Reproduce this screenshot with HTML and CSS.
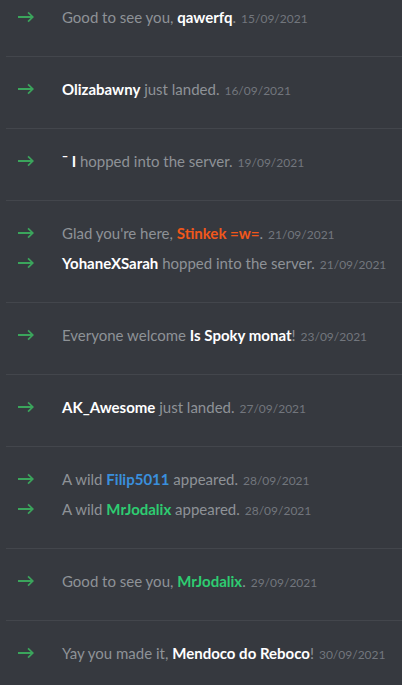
FILE: index.html
```html
<!DOCTYPE html>
<html lang="en">
<head>
    <meta charset="UTF-8">
    <meta name="viewport" content="width=device-width, initial-scale=1.0">
    <title>Welcome messages</title>
    <link rel="stylesheet" href="styles.css">
</head>
<body>
    <main class="chat">
        <div class="group">
            <div class="msg">
                <svg class="arrow" viewBox="0 0 18 18"><path d="M0 8h14.2l-3.6-3.6 1.4-1.4 6 6-6 6-1.4-1.4 3.6-3.6H0z"/></svg>
                <span class="text">Good to see you, <strong class="name">qawerfq</strong>.</span><time class="stamp">15/09/2021</time>
            </div>
        </div>
        <div class="group">
            <div class="msg">
                <svg class="arrow" viewBox="0 0 18 18"><path d="M0 8h14.2l-3.6-3.6 1.4-1.4 6 6-6 6-1.4-1.4 3.6-3.6H0z"/></svg>
                <span class="text"><strong class="name">Olizabawny</strong> just landed.</span><time class="stamp">16/09/2021</time>
            </div>
        </div>
        <div class="group">
            <div class="msg">
                <svg class="arrow" viewBox="0 0 18 18"><path d="M0 8h14.2l-3.6-3.6 1.4-1.4 6 6-6 6-1.4-1.4 3.6-3.6H0z"/></svg>
                <span class="text"><strong class="name">¯ I</strong> hopped into the server.</span><time class="stamp">19/09/2021</time>
            </div>
        </div>
        <div class="group">
            <div class="msg">
                <svg class="arrow" viewBox="0 0 18 18"><path d="M0 8h14.2l-3.6-3.6 1.4-1.4 6 6-6 6-1.4-1.4 3.6-3.6H0z"/></svg>
                <span class="text">Glad you're here, <strong class="name orange">Stinkek =w=</strong>.</span><time class="stamp">21/09/2021</time>
            </div>
            <div class="msg">
                <svg class="arrow" viewBox="0 0 18 18"><path d="M0 8h14.2l-3.6-3.6 1.4-1.4 6 6-6 6-1.4-1.4 3.6-3.6H0z"/></svg>
                <span class="text"><strong class="name">YohaneXSarah</strong> hopped into the server.</span><time class="stamp">21/09/2021</time>
            </div>
        </div>
        <div class="group">
            <div class="msg">
                <svg class="arrow" viewBox="0 0 18 18"><path d="M0 8h14.2l-3.6-3.6 1.4-1.4 6 6-6 6-1.4-1.4 3.6-3.6H0z"/></svg>
                <span class="text">Everyone welcome <strong class="name">Is Spoky monat</strong>!</span><time class="stamp">23/09/2021</time>
            </div>
        </div>
        <div class="group">
            <div class="msg">
                <svg class="arrow" viewBox="0 0 18 18"><path d="M0 8h14.2l-3.6-3.6 1.4-1.4 6 6-6 6-1.4-1.4 3.6-3.6H0z"/></svg>
                <span class="text"><strong class="name">AK_Awesome</strong> just landed.</span><time class="stamp">27/09/2021</time>
            </div>
        </div>
        <div class="group">
            <div class="msg">
                <svg class="arrow" viewBox="0 0 18 18"><path d="M0 8h14.2l-3.6-3.6 1.4-1.4 6 6-6 6-1.4-1.4 3.6-3.6H0z"/></svg>
                <span class="text">A wild <strong class="name blue">Filip5011</strong> appeared.</span><time class="stamp">28/09/2021</time>
            </div>
            <div class="msg">
                <svg class="arrow" viewBox="0 0 18 18"><path d="M0 8h14.2l-3.6-3.6 1.4-1.4 6 6-6 6-1.4-1.4 3.6-3.6H0z"/></svg>
                <span class="text">A wild <strong class="name green">MrJodalix</strong> appeared.</span><time class="stamp">28/09/2021</time>
            </div>
        </div>
        <div class="group">
            <div class="msg">
                <svg class="arrow" viewBox="0 0 18 18"><path d="M0 8h14.2l-3.6-3.6 1.4-1.4 6 6-6 6-1.4-1.4 3.6-3.6H0z"/></svg>
                <span class="text">Good to see you, <strong class="name green">MrJodalix</strong>.</span><time class="stamp">29/09/2021</time>
            </div>
        </div>
        <div class="group">
            <div class="msg">
                <svg class="arrow" viewBox="0 0 18 18"><path d="M0 8h14.2l-3.6-3.6 1.4-1.4 6 6-6 6-1.4-1.4 3.6-3.6H0z"/></svg>
                <span class="text">Yay you made it, <strong class="name">Mendoco do Reboco</strong>!</span><time class="stamp">30/09/2021</time>
            </div>
        </div>
    </main>
</body>
</html>
```

FILE: styles.css
```css
body {
    margin: 0;
    background-color: #36393f;
    font-family: 'Lato', 'Noto Sans', sans-serif;
    overflow: hidden;
}
.chat {
    margin-top: -15px; /* list is scrolled a little */
}
.group {
    margin-left: 6px;
    padding: 17px 0 24px;
    border-bottom: 1px solid #43464c;
}
.msg {
    display: flex;
    align-items: center;
    height: 30px;
    padding-left: 12px;
    white-space: nowrap;
}
.arrow {
    width: 16px;
    height: 16px;
    fill: #3ba55c;
    margin-right: 28px;
    flex-shrink: 0;
}
.text {
    font-size: 15px;
    color: #8e9297;
}
.name {
    font-weight: 700;
    color: #ffffff;
}
.orange {
    color: #f0571b;
}
.blue {
    color: #3a8fdc;
}
.green {
    color: #2ecc71;
}
.stamp {
    margin-left: 5px;
    font-size: 12px;
    color: #72767d;
    padding-top: 2px;
}
```
